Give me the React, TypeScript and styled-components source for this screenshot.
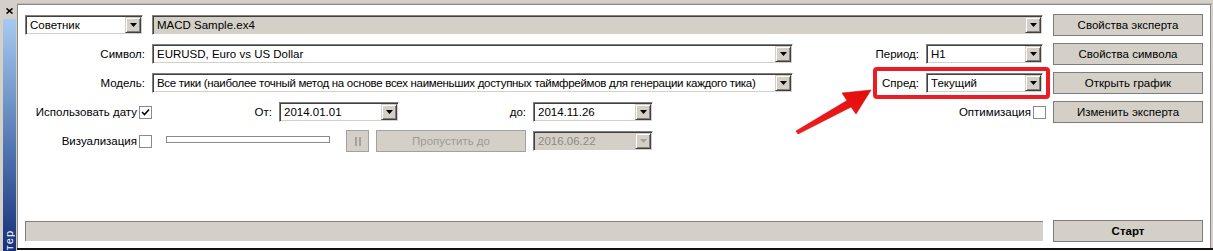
import React from 'react';
import styled, { createGlobalStyle } from 'styled-components';

const GlobalStyle = createGlobalStyle`
  html, body {
    margin: 0;
    padding: 0;
    background: #ffffff;
  }
  body {
    font-family: "Liberation Sans", Arial, sans-serif;
    font-size: 11.5px;
    color: #000000;
  }
  * {
    box-sizing: border-box;
  }
`;

const Window = styled.div`
  display: flex;
  width: 1213px;
  height: 251px;
  overflow: hidden;
  background: #d4d0c8;
`;

const SideStrip = styled.div`
  width: 17px;
  display: flex;
  flex-direction: column;
  padding: 0 1px 0 3px;
`;

const CloseMark = styled.div`
  height: 19px;
  display: flex;
  align-items: flex-start;
  padding: 8px 0 0 3px;
`;

const CaptionBar = styled.div`
  flex: 1;
  overflow: hidden;
  display: flex;
  flex-direction: column;
  justify-content: flex-end;
  align-items: center;
  background: linear-gradient(to bottom, #a6caf0 0%, #5a7fb8 50%, #15307a 100%);
`;

const CaptionText = styled.span`
  writing-mode: vertical-rl;
  transform: rotate(180deg);
  color: #ffffff;
  font-size: 11px;
  line-height: 13px;
  letter-spacing: 1px;
  margin-bottom: -20px;
  white-space: nowrap;
`;

const Workspace = styled.div`
  flex: 1;
  display: flex;
  flex-direction: column;
`;

const TopGutter = styled.div`
  height: 4px;
  border-top: 2px solid #d4d0c8;
  border-bottom: 1px solid #bdb9b1;
`;

const Panel = styled.div`
  position: relative;
  flex: 1;
  display: flex;
  flex-direction: column;
  background: #ffffff;
  border-top: 1px solid #8a8a8a;
  border-left: 1px solid #8a8a8a;
  border-right: 1px solid #8a8a8a;
  margin-right: 2px;
  padding: 9px 0 6px 7px;
`;

const BottomEdge = styled.div`
  height: 2px;
  background: #101010;
`;

const FootGap = styled.div`
  height: 1px;
  background: #ffffff;
`;

const Form = styled.div`
  flex: 1;
  display: grid;
  grid-template-columns: 1018px 150px;
  grid-template-rows: repeat(5, 22px) 1fr 22px;
  column-gap: 10px;
  row-gap: 7px;
`;

const FieldRow = styled.div<{ $row: number }>`
  grid-column: 1;
  grid-row: ${(p) => p.$row};
  display: flex;
  align-items: center;
`;

const Label = styled.div<{ $w: number }>`
  width: ${(p) => p.$w}px;
  flex: none;
  text-align: right;
  padding-right: 7px;
  white-space: nowrap;
`;

const CheckCell = styled.div<{ $w?: number; $pull?: number }>`
  width: ${(p) => (p.$w ? `${p.$w}px` : 'auto')};
  flex: none;
  display: flex;
  justify-content: flex-end;
  align-items: center;
  gap: 2px;
  margin-right: ${(p) => p.$pull ?? 0}px;
  white-space: nowrap;
`;

const Spacer = styled.div<{ $w?: number }>`
  flex: ${(p) => (p.$w ? 'none' : '1')};
  width: ${(p) => (p.$w ? `${p.$w}px` : 'auto')};
`;

const SelectBox = styled.div<{ $w: number; $grey?: boolean; $dim?: boolean }>`
  width: ${(p) => p.$w}px;
  height: 20px;
  flex: none;
  display: flex;
  align-items: center;
  border: 1px solid;
  border-color: #808080 #ffffff #ffffff #808080;
  box-shadow: inset 1px 1px 0 #404040, inset -1px -1px 0 #d4d0c8;
  background: ${(p) => (p.$grey ? '#d4d0c8' : '#ffffff')};
  color: ${(p) => (p.$dim ? '#8c8a86' : '#000000')};
  padding: 1px 1px 1px 4px;
`;

const SelectValue = styled.span<{ $tight?: boolean }>`
  flex: 1;
  white-space: nowrap;
  overflow: hidden;
  letter-spacing: ${(p) => (p.$tight ? '-0.3px' : 'normal')};
`;

const ArrowButton = styled.span`
  width: 16px;
  height: 16px;
  flex: none;
  display: flex;
  align-items: center;
  justify-content: center;
  background: #d4d0c8;
  border: 1px solid;
  border-color: #d4d0c8 #404040 #404040 #d4d0c8;
  box-shadow: inset 1px 1px 0 #ffffff, inset -1px -1px 0 #808080;
`;

const Button = styled.div<{ $row: number; $bold?: boolean }>`
  grid-column: 2;
  grid-row: ${(p) => p.$row};
  display: flex;
  align-items: center;
  justify-content: center;
  background: #d4d0c8;
  border: 1px solid #7c7c7c;
  font-weight: ${(p) => (p.$bold ? 'bold' : 'normal')};
  white-space: nowrap;
`;

const FlatButton = styled.div<{ $w: number }>`
  width: ${(p) => p.$w}px;
  height: 22px;
  flex: none;
  display: flex;
  align-items: center;
  justify-content: center;
  background: #d4d0c8;
  border: 1px solid #a4a29e;
  color: #9c9a96;
  white-space: nowrap;
`;

const CheckBox = styled.span`
  width: 13px;
  height: 13px;
  flex: none;
  display: flex;
  align-items: center;
  justify-content: center;
  background: #ffffff;
  border: 1px solid #8a8a8a;
`;

const SliderTrack = styled.div<{ $w: number }>`
  width: ${(p) => p.$w}px;
  height: 7px;
  flex: none;
  margin-top: -3px;
  background: #ffffff;
  border: 1px solid #8a8a8a;
`;

const ProgressBar = styled.div`
  grid-column: 1;
  grid-row: 7;
  align-self: center;
  height: 20px;
  background: #d4d0c8;
  border-top: 1px solid #808080;
  border-left: 1px solid #808080;
`;

const SpreadGroup = styled.div`
  position: relative;
  display: flex;
  align-items: center;
  height: 22px;
`;

const Highlight = styled.div`
  position: absolute;
  left: 80px;
  right: -7px;
  top: -5px;
  bottom: -5px;
  border: 4px solid #ec1c24;
  border-radius: 4px;
  pointer-events: none;
`;

const Pointer = styled.svg`
  position: absolute;
  left: 772px;
  top: 79px;
  width: 90px;
  height: 56px;
  overflow: visible;
  pointer-events: none;
`;

const DownArrow = ({ dim }: { dim?: boolean }) => (
  <svg width="7" height="4" viewBox="0 0 7 4">
    <polygon points="0,0 7,0 3.5,4" fill={dim ? '#a4a29e' : '#000000'} />
  </svg>
);

type SelectProps = { w: number; value: string; grey?: boolean; dim?: boolean; tight?: boolean };

const Select = ({ w, value, grey, dim, tight }: SelectProps) => (
  <SelectBox $w={w} $grey={grey} $dim={dim}>
    <SelectValue $tight={tight}>{value}</SelectValue>
    <ArrowButton>
      <DownArrow dim={dim} />
    </ArrowButton>
  </SelectBox>
);

const Check = ({ checked }: { checked?: boolean }) => (
  <CheckBox>
    {checked && (
      <svg width="9" height="9" viewBox="0 0 9 9">
        <polyline points="1,4 3.5,6.5 8,1.5" fill="none" stroke="#000" strokeWidth="1.6" />
      </svg>
    )}
  </CheckBox>
);

const App = () => {
  return (
    <>
      <GlobalStyle />
      <Window>
        <SideStrip>
          <CloseMark>
            <svg width="7" height="6" viewBox="0 0 7 6">
              <path d="M0.5 0.5 L6.5 5.5 M6.5 0.5 L0.5 5.5" stroke="#000" strokeWidth="1.6" />
            </svg>
          </CloseMark>
          <CaptionBar>
            <CaptionText>Тестер</CaptionText>
          </CaptionBar>
        </SideStrip>
        <Workspace>
          <TopGutter />
          <Panel>
            <Form>
              <FieldRow $row={1}>
                <Select w={118} value="Советник" />
                <Spacer $w={9} />
                <Select w={891} value="MACD Sample.ex4" grey />
              </FieldRow>
              <Button $row={1}>Свойства эксперта</Button>

              <FieldRow $row={2}>
                <Label $w={127}>Символ:</Label>
                <Select w={641} value="EURUSD, Euro vs US Dollar" />
                <Label $w={133}>Период:</Label>
                <Select w={117} value="H1" />
              </FieldRow>
              <Button $row={2}>Свойства символа</Button>

              <FieldRow $row={3}>
                <Label $w={127}>Модель:</Label>
                <Select
                  w={641}
                  tight
                  value="Все тики (наиболее точный метод на основе всех наименьших доступных таймфреймов для генерации каждого тика)"
                />
                <SpreadGroup>
                  <Label $w={133}>Спред:</Label>
                  <Select w={117} value="Текущий" />
                  <Highlight />
                </SpreadGroup>
              </FieldRow>
              <Button $row={3}>Открыть график</Button>

              <FieldRow $row={4}>
                <CheckCell $w={127}>
                  Использовать дату
                  <Check checked />
                </CheckCell>
                <Label $w={127}>От:</Label>
                <Select w={120} value="2014.01.01" />
                <Label $w={134}>до:</Label>
                <Select w={120} value="2014.11.26" />
                <Spacer />
                <CheckCell $pull={-3}>
                  Оптимизация
                  <Check />
                </CheckCell>
              </FieldRow>
              <Button $row={4}>Изменить эксперта</Button>

              <FieldRow $row={5}>
                <CheckCell $w={127}>
                  Визуализация
                  <Check />
                </CheckCell>
                <Spacer $w={14} />
                <SliderTrack $w={164} />
                <Spacer $w={16} />
                <FlatButton $w={23}>
                  <svg width="6" height="9" viewBox="0 0 6 9">
                    <rect x="0" y="0" width="2" height="9" fill="#a4a29e" />
                    <rect x="4" y="0" width="2" height="9" fill="#a4a29e" />
                  </svg>
                </FlatButton>
                <Spacer $w={7} />
                <FlatButton $w={150}>Пропустить до</FlatButton>
                <Spacer $w={7} />
                <Select w={120} value="2016.06.22" grey dim />
              </FieldRow>

              <ProgressBar />
              <Button $row={7} $bold>
                Старт
              </Button>
            </Form>
            <Pointer viewBox="0 0 90 56">
              <defs>
                <linearGradient id="arrowFill" x1="0" y1="1" x2="1" y2="0">
                  <stop offset="0" stopColor="#f02020" />
                  <stop offset="1" stopColor="#e40c0c" />
                </linearGradient>
              </defs>
              <polygon
                points="6,47 57,16.5 52,9 81,6 66,30 61,23 8,50"
                fill="url(#arrowFill)"
                stroke="#d40a0a"
                strokeWidth="0.6"
                strokeLinejoin="round"
              />
            </Pointer>
          </Panel>
          <BottomEdge />
          <FootGap />
        </Workspace>
      </Window>
    </>
  );
};

export default App;
